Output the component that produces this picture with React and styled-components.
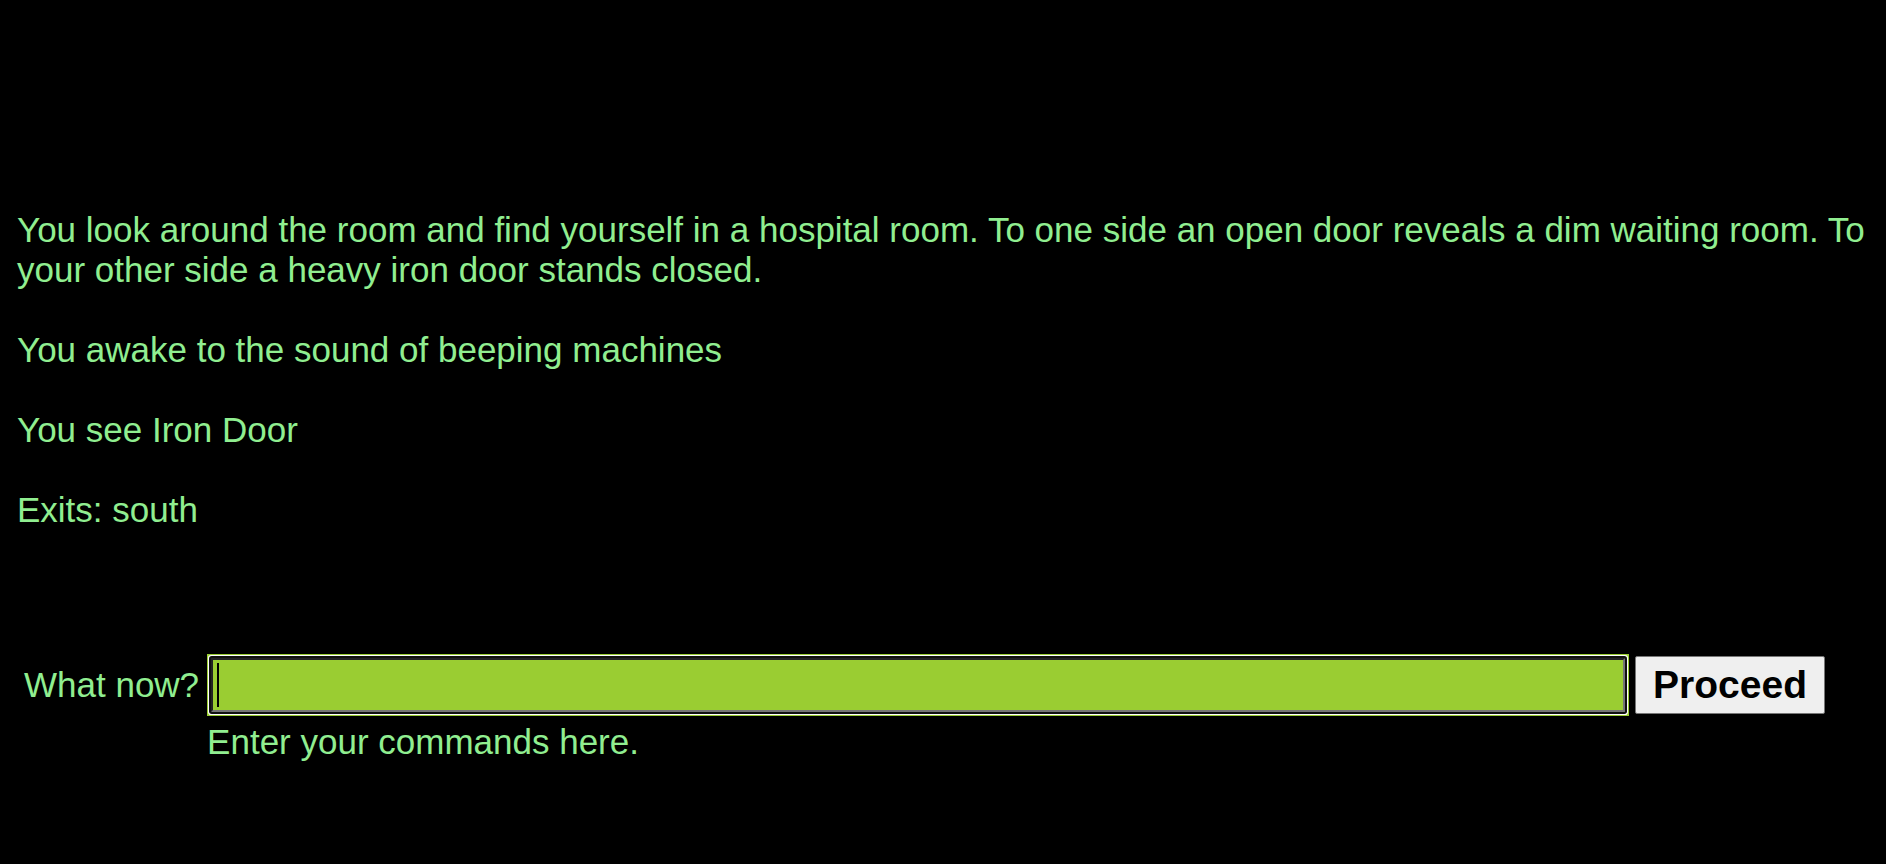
import React from "react";
import styled, { createGlobalStyle } from "styled-components";

const GlobalStyle = createGlobalStyle`
  body {
    margin: 0;
    background: #000;
    color: #90ee90;
    font-family: "Liberation Sans", Arial, sans-serif;
    font-size: 35px;
    line-height: 40px;
  }
`;

const Page = styled.main`
  padding: 210px 17px 40px;
`;

const Story = styled.section`
  display: flex;
  flex-direction: column;
  gap: 40px;
`;

const Passage = styled.p`
  margin: 0;
`;

const CommandForm = styled.form`
  display: grid;
  grid-template-columns: auto 1fr auto;
  align-items: center;
  gap: 6px;
  margin-top: 124px;
  padding: 0 44px 0 7px;
`;

const CommandLabel = styled.label`
  padding-right: 2px;
`;

const InputFrame = styled.div`
  position: relative;
  display: flex;
  padding: 4px;
  background: #9acd32;
`;

const CommandInput = styled.input`
  box-sizing: border-box;
  flex: 1;
  min-width: 0;
  height: 54px;
  padding: 1px 4px;
  border: 2px solid;
  border-color: #222 #767676 #767676 #222;
  border-radius: 1px;
  background: #9acd32;
  color: #000;
  caret-color: transparent;
  font: inherit;
  outline: none;
  box-shadow: 0 0 0 2px #101010, 0 0 0 3px #fff;
`;

const Caret = styled.span`
  position: absolute;
  top: 9px;
  left: 10px;
  width: 2px;
  height: 44px;
  background: #000;
  pointer-events: none;
`;

const ProceedButton = styled.button`
  height: 58px;
  padding: 0 17px;
  border: 1px solid #767676;
  border-radius: 2px;
  background: #efefef;
  color: #000;
  font: bold 39px "Liberation Sans", Arial, sans-serif;
`;

const Hint = styled.div`
  grid-column: 2;
`;

export default function App() {
  return (
    <Page>
      <GlobalStyle />
      <Story>
        <Passage>
          You look around the room and find yourself in a hospital room. To one side an open door
          reveals a dim waiting room. To your other side a heavy iron door stands closed.
        </Passage>
        <Passage>You awake to the sound of beeping machines</Passage>
        <Passage>You see Iron Door</Passage>
        <Passage>Exits: south</Passage>
      </Story>
      <CommandForm onSubmit={(event) => event.preventDefault()}>
        <CommandLabel htmlFor="command">What now?</CommandLabel>
        <InputFrame>
          <CommandInput
            id="command"
            type="text"
            autoComplete="off"
            aria-describedby="command-hint"
          />
          <Caret aria-hidden="true" />
        </InputFrame>
        <ProceedButton type="submit">Proceed</ProceedButton>
        <Hint id="command-hint">Enter your commands here.</Hint>
      </CommandForm>
    </Page>
  );
}
